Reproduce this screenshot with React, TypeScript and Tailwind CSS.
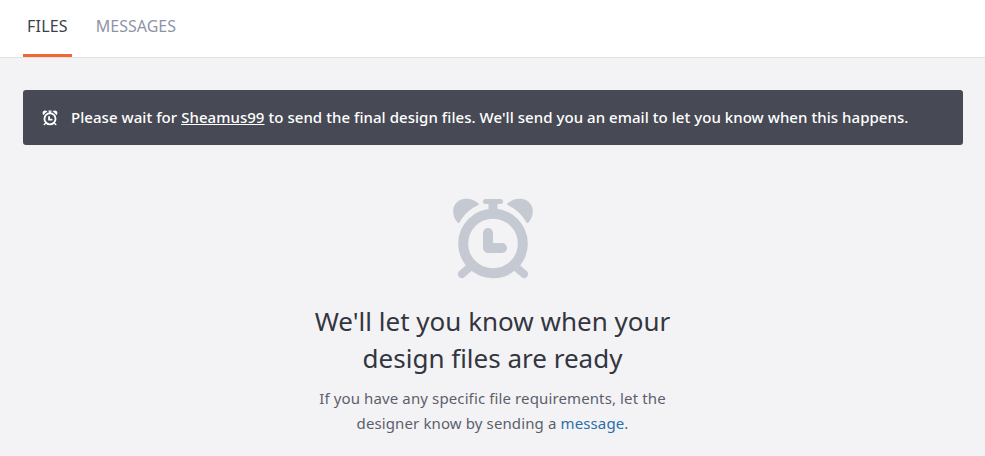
const AlarmIcon = ({ className }: { className: string }) => (
  <svg viewBox="0 0 86 84" className={className} fill="currentColor">
    <path d="M7.5 25.5C4.5 22 3 18 3.2 13.5C3.6 6.5 9 2 15.5 1.7C20.5 1.5 25 3 28.5 6.5C29 7 29 7.6 28.4 8C20.5 11.5 14 17.5 9.5 25.5C9 26.3 8.1 26.3 7.5 25.5Z" />
    <path d="M78.5 25.5C81.5 22 83 18 82.8 13.5C82.4 6.5 77 2 70.5 1.7C65.5 1.5 61 3 57.5 6.5C57 7 57 7.6 57.6 8C65.5 11.5 72 17.5 76.5 25.5C77 26.3 77.9 26.3 78.5 25.5Z" />
    <rect x="33" y="2" width="20" height="5" rx="2.5" />
    <rect x="38.5" y="5" width="9" height="12" />
    <circle cx="43" cy="46.5" r="29.8" fill="none" stroke="currentColor" strokeWidth="10" />
    <path d="M38 36V51H52" fill="none" stroke="currentColor" strokeWidth="10" strokeLinecap="round" strokeLinejoin="round" />
    <path d="M20 70L12 77M66 70L74 77" fill="none" stroke="currentColor" strokeWidth="8" strokeLinecap="round" />
  </svg>
);

export default function App() {
  return (
    <div className="min-h-screen bg-[#f3f3f6] font-['Noto_Sans',sans-serif]">
      <nav className="flex h-[58px] gap-6 border-b border-[#e2e2e4] bg-white pl-[23px]">
        <div className="h-[57px] border-b-[3px] border-[#f26535] px-1 pt-[15px] text-base leading-[22px] tracking-[0.2px] text-[#3d404a]">
          FILES
        </div>
        <div className="h-[57px] pt-[15px] text-base leading-[22px] text-[#8f93a6]">MESSAGES</div>
      </nav>

      <div className="mt-[32px] mr-[22px] ml-[23px] flex h-[55px] items-center gap-[13px] rounded-[3px] bg-[#474a55] pl-[19px] text-[15px] font-medium tracking-[0.05px] text-white">
        <AlarmIcon className="h-4 w-4 text-white" />
        <span>
          Please wait for <span className="underline">Sheamus99</span> to send the final design files. We'll send you
          an email to let you know when this happens.
        </span>
      </div>

      <div className="mt-[52px] flex flex-col items-center text-center">
        <AlarmIcon className="h-[84px] w-[86px] text-[#c5c9d2]" />
        <h2 className="mt-[22px] w-[420px] text-[26px] leading-[37px] text-[#33363f]">
          We'll let you know when your design files are ready
        </h2>
        <p className="mt-[9px] w-[360px] text-[15px] leading-[25px] tracking-[0.12px] text-[#5c5f6b]">
          If you have any specific file requirements, let the designer know by sending a{" "}
          <span className="text-[#2a6ea8]">message</span>.
        </p>
      </div>
    </div>
  );
}
